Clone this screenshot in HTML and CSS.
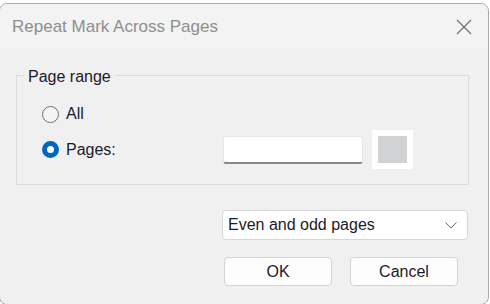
FILE: index.html
```html
<!DOCTYPE html>
<html lang="en">
<head>
    <meta charset="UTF-8">
    <meta name="viewport" content="width=device-width, initial-scale=1.0">
    <title>Repeat Mark Across Pages</title>
    <link rel="stylesheet" href="styles.css">
</head>
<body>
    <div class="window">
        <div class="titlebar">
            <span class="title">Repeat Mark Across Pages</span>
            <svg class="close" width="16" height="16" viewBox="0 0 16 16">
                <path d="M1 1 L15 15 M15 1 L1 15" stroke="#6e6e6e" stroke-width="1.1" fill="none"/>
            </svg>
        </div>
        <div class="content">
            <fieldset class="group">
                <legend>Page range</legend>
                <div class="row row-all">
                    <label class="radio"><span class="dot"></span>All</label>
                </div>
                <div class="row row-pages">
                    <label class="radio"><span class="dot checked"></span>Pages:</label>
                    <div class="textbox"></div>
                    <div class="swatch"><div class="swatch-fill"></div></div>
                </div>
            </fieldset>
            <div class="select">
                <span>Even and odd pages</span>
                <svg width="12" height="7" viewBox="0 0 12 7">
                    <path d="M0.5 0.5 L6 6 L11.5 0.5" stroke="#6a6a6a" stroke-width="1" fill="none"/>
                </svg>
            </div>
            <div class="buttons">
                <button>OK</button>
                <button>Cancel</button>
            </div>
        </div>
    </div>
</body>
</html>
```
FILE: styles.css
```css
html, body {
    margin: 0;
    padding: 0;
}
body {
    background: #ffffff;
    font-family: "Liberation Sans", Arial, sans-serif;
    font-size: 16px;
    color: #1a1a2a;
    overflow: hidden;
    width: 490px;
    height: 304px;
}
.window {
    box-sizing: border-box;
    width: 490px;
    height: 302px;
    margin: 3px 0 0 -1px;
    border: 1px solid #a9a9a9;
    border-radius: 8px;
    background: #f0f0f0;
    overflow: hidden;
}
.titlebar {
    height: 44px;
    background: #f3f3f3;
    display: flex;
    align-items: center;
    justify-content: space-between;
    padding: 0 16px 0 12px;
}
.title {
    font-size: 17px;
    color: #8e8e8e;
    padding-top: 2px;
}
.close {
    margin-top: 1px;
}
.content {
    padding-top: 16px;
}
.group {
    box-sizing: border-box;
    width: 453px;
    margin: 0 0 0 16px;
    padding: 13px 0 15px 0;
    border: 1px solid #dcdcdc;
    min-width: 0;
}
.group legend {
    margin-left: 7px;
    padding: 4px 4px 0;
    line-height: 18px;
}
.row {
    display: flex;
    align-items: center;
    padding-left: 25px;
}
.row-all {
    height: 30px;
}
.row-pages {
    height: 39px;
    margin-top: 1px;
}
.radio {
    display: flex;
    align-items: center;
    gap: 7px;
    width: 181px;
}
.dot {
    box-sizing: border-box;
    width: 17px;
    height: 17px;
    border-radius: 50%;
    border: 1.5px solid #6f6f6f;
    background: #f4f4f4;
}
.dot.checked {
    border: 5.5px solid #0067c0;
    background: #ffffff;
}
.textbox {
    box-sizing: border-box;
    width: 140px;
    height: 28px;
    background: #ffffff;
    border: 1px solid #e6e6e6;
    border-bottom: 2px solid #8a8a8a;
    border-radius: 3px;
    margin-right: 9px;
}
.swatch {
    box-sizing: border-box;
    width: 41px;
    height: 39px;
    padding: 6px;
    background: #ffffff;
}
.swatch-fill {
    width: 100%;
    height: 100%;
    background: #d1d2d4;
}
.select {
    box-sizing: border-box;
    width: 246px;
    height: 30px;
    margin: 25px 0 0 222px;
    padding: 0 10px 0 5px;
    background: #ffffff;
    border: 1px solid #d6d6d6;
    border-radius: 4px;
    display: flex;
    align-items: center;
    justify-content: space-between;
}
.buttons {
    display: flex;
    gap: 18px;
    margin: 17px 0 0 224px;
}
button {
    box-sizing: border-box;
    width: 108px;
    height: 29px;
    font-family: inherit;
    font-size: 16px;
    color: #1a1a2a;
    background: #fdfdfd;
    border: 1px solid #d3d3d3;
    border-radius: 4px;
    padding: 0;
}
```
